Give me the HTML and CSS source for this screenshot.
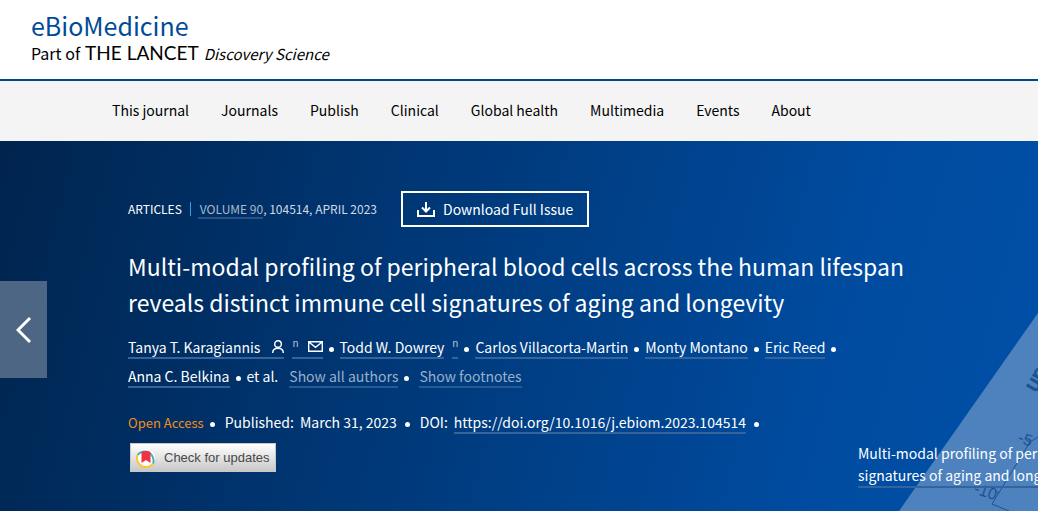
FILE: index.html
```html
<!DOCTYPE html>
<html lang="en">
<head>
<meta charset="UTF-8" />
<meta name="viewport" content="width=device-width, initial-scale=1" />
<title>eBioMedicine</title>
<link rel="stylesheet" href="styles.css">
</head>
<body>

<header class="site-header">
  <a class="brand" href="#">
    <span class="brand-name">eBioMedicine</span>
    <span class="brand-sub">Part of <span class="brand-lancet">THE LANCET</span> <em>Discovery Science</em></span>
  </a>
</header>

<nav class="main-nav">
  <a href="#">This journal</a>
  <a href="#">Journals</a>
  <a href="#">Publish</a>
  <a href="#">Clinical</a>
  <a href="#">Global health</a>
  <a href="#">Multimedia</a>
  <a href="#">Events</a>
  <a href="#">About</a>
</nav>

<main class="hero">
  <!-- cover figure -->
  <svg class="figure" width="140" height="200" viewBox="0 0 140 200" aria-hidden="true">
    <path d="M140 2V200H1Z" fill="#4d82be" />
    <g class="figure-axis">
      <path d="M140 126L132 131L94 193L111 200M132 131l-4-2M101 182l-4-2" fill="none" />
      <text class="figure-tick" transform="translate(119 131) rotate(18)">-5</text>
      <text class="figure-tick" transform="translate(75 182) rotate(18)">-10</text>
      <text class="figure-axis-name" transform="translate(138 82) rotate(-60)">un</text>
    </g>
  </svg>

  <button class="prev" type="button" aria-label="Previous article">
    <svg width="16" height="28" viewBox="0 0 16 28"><path d="M14 2L2 14L14 26" /></svg>
  </button>

  <div class="article">
    <div class="article-meta">
      <span class="article-type">ARTICLES</span>
      <span class="article-issue"><a href="#">VOLUME 90</a>, 104514, APRIL 2023</span>
      <button class="download" type="button">
        <svg width="18" height="15" viewBox="0 0 18 15" fill="none" stroke="#fff" stroke-width="2">
          <path d="M9 0V9M5 5.500L9 9.500L13 5.500M1 8V14H17V8" />
        </svg>
        Download Full Issue
      </button>
    </div>

    <h1>Multi-modal profiling of peripheral blood cells across the human lifespan reveals distinct immune cell signatures of aging and longevity</h1>

    <ul class="authors">
      <li class="dot">
        <a class="lined author-icon" href="#">Tanya T. Karagiannis
          <svg width="12" height="13" viewBox="0 0 12 13"><circle cx="6" cy="4" r="3.300" /><path d="M.7 13C.7 9.500 3 8.200 6 8.200S11.300 9.500 11.300 13" /></svg>
        </a>
        <a class="lined note" href="#">
          <sup>n</sup>
          <svg width="15" height="11" viewBox="0 0 15 11"><path d="M.7.7H14.300V10.300H.7ZM1.500 1.500L7.500 6.300L13.500 1.500" /></svg>
        </a>
      </li>
      <li class="dot"><a class="lined" href="#">Todd W. Dowrey</a><a class="lined note" href="#"><sup>n</sup></a></li>
      <li class="dot"><a class="lined" href="#">Carlos Villacorta-Martin</a></li>
      <li class="dot"><a class="lined" href="#">Monty Montano</a></li>
      <li class="dot"><a class="lined" href="#">Eric Reed</a></li>
      <li class="dot"><a class="lined" href="#">Anna C. Belkina</a></li>
      <li>et al.</li>
      <li class="dot toggle"><a class="lined" href="#">Show all authors</a></li>
      <li class="toggle-last"><a class="lined" href="#">Show footnotes</a></li>
    </ul>

    <div class="publication">
      <span class="dot open-access">Open Access</span>
      <span class="dot published"><span>Published:</span><span>March 31, 2023</span></span>
      <span class="dot doi"><span>DOI:</span><a class="lined" href="#">https://doi.org/10.1016/j.ebiom.2023.104514</a></span>
    </div>

    <button class="crossmark" type="button">
      <svg width="20" height="20" viewBox="0 0 20 20">
        <circle cx="10" cy="10" r="9" fill="#fff" />
        <path d="M1.500 7A9 9 0 0 1 17 15.700" fill="none" stroke="#3eb1c8" stroke-width="2" />
        <path d="M17 15.700A9 9 0 0 1 1.500 7" fill="none" stroke="#ffc72c" stroke-width="2" />
        <path d="M5.500 4C8 2.500 12 2.500 14.500 4V15L10 12L5.500 15Z" fill="#ef3340" />
      </svg>
      Check for updates
    </button>
  </div>

  <a class="caption lined" href="#">Multi-modal profiling of peripheral blood cells across the human lifespan reveals distinct immune cell<br>signatures of aging and longevity</a>
</main>

</body>
</html>
```
FILE: styles.css
```css
* {
  box-sizing: border-box;
}

body {
  margin: 0;
  min-height: 100vh;
  display: flex;
  flex-direction: column;
  font-family: "Noto Sans CJK SC", "Open Sans", sans-serif;
  font-size: 14px;
  line-height: 29px;
  color: #000;
}

a {
  color: inherit;
  text-decoration: none;
}

button {
  font: inherit;
  cursor: pointer;
}

/* Header */
.site-header {
  padding: 9px 31px 13px;
  border-bottom: 2px solid #00468b;
}

.brand {
  display: flex;
  flex-direction: column;
}

.brand-name {
  font-size: 25px;
  line-height: 32px;
  color: #004b98;
}

.brand-sub {
  display: flex;
  gap: 5px;
  align-items: baseline;
  font-size: 16px;
  line-height: 24px;
  white-space: nowrap;
}

.brand-sub em {
  font-size: 15px;
}

.brand-lancet {
  font-family: Lato, sans-serif;
  font-size: 19px;
}

/* Navigation */
.main-nav {
  display: flex;
  gap: 32px;
  height: 60px;
  padding: 0 0 2px 112px;
  align-items: center;
  background: #f4f4f4;
  white-space: nowrap;
}

/* Article banner */
.hero {
  position: relative;
  flex: 1;
  padding: 50px 110px 38px 128px;
  overflow: hidden;
  color: #fff;
  background: linear-gradient(105deg, #00244e 0%, #004b9f 78%, #0050a8 100%);
}

.figure {
  position: absolute;
  right: 0;
  bottom: 0;
}

.figure-axis {
  fill: #1d5290;
  stroke: #1d5290;
  stroke-width: 1;
}

.figure-tick {
  font: 16px "Liberation Sans", sans-serif;
  stroke: none;
}

.figure-axis-name {
  font: 22px "Liberation Sans", sans-serif;
}

.prev {
  position: absolute;
  left: 0;
  top: 140px;
  width: 47px;
  height: 97px;
  padding: 0;
  border: 0;
  background: #4d6683;
}

.prev svg {
  display: block;
  margin: 0 auto;
  fill: none;
  stroke: #fff;
  stroke-width: 3;
}

.article {
  max-width: 800px;
}

.article-meta {
  display: flex;
  align-items: center;
  font-size: 12px;
  line-height: 18px;
  white-space: nowrap;
}

.article-type {
  padding-right: 8px;
  margin-right: 7px;
  border-right: 1px solid #2ea3d6;
  line-height: 14px;
}

.article-issue {
  color: #d0dae6;
}

.article-issue a {
  padding-left: 2px;
  color: #a9bace;
  border-bottom: 2px solid #265288;
}

.download {
  display: flex;
  align-items: center;
  gap: 8px;
  height: 36px;
  margin-left: 24px;
  padding: 0 14px;
  border: 2px solid #fff;
  background: transparent;
  color: #fff;
  font-size: 14px;
}

h1 {
  margin: 21px 0 13px;
  font-size: 23px;
  font-weight: 400;
  line-height: 36px;
}

.lined {
  border-bottom: 2px solid #33659c;
}

.authors {
  display: flex;
  flex-wrap: wrap;
  margin: 0;
  padding: 0;
  list-style: none;
}

.authors li {
  display: flex;
  align-items: center;
  height: 29px;
}

.authors .lined,
.publication .lined {
  line-height: 20px;
}

.authors svg {
  fill: none;
  stroke: #fff;
  stroke-width: 1.4;
}

.author-icon {
  display: flex;
  align-items: center;
  gap: 12px;
}

.note {
  display: flex;
  align-items: center;
  gap: 9px;
  margin-left: 8px;
}

.note sup {
  height: 20px;
  font-size: 10px;
  line-height: 12px;
  color: #b3c4d8;
}

.toggle {
  margin-left: 11px;
}

.toggle-last {
  margin-left: 4px;
}

.toggle .lined,
.toggle-last .lined {
  color: #99b0cb;
  border-color: #265a94;
}

/* Round separator after an entry */
.dot::after {
  content: "";
  width: 5px;
  height: 5px;
  margin: 4px 6px 0;
  border-radius: 50%;
  background: #fff;
}

.publication {
  display: flex;
  flex-wrap: wrap;
  margin-top: 17px;
}

.publication .dot {
  display: flex;
  align-items: center;
}

.open-access {
  font-size: 13px;
  color: #f28c1c;
}

.published,
.doi {
  gap: 6px;
  margin-left: 4px;
}

.published::after,
.doi::after {
  margin-left: 2px;
}

.crossmark {
  display: flex;
  align-items: center;
  gap: 8px;
  height: 29px;
  margin: 6px 0 0 2px;
  padding: 0 5px;
  border: 1px solid #c8c8c8;
  background: linear-gradient(#fff, #c8c8c8);
  color: #484848;
  font: 13px "Liberation Sans", sans-serif;
}

.crossmark svg {
  flex-shrink: 0;
}

.caption {
  position: absolute;
  left: 858px;
  bottom: 23px;
  line-height: 22px;
  white-space: nowrap;
}
```
